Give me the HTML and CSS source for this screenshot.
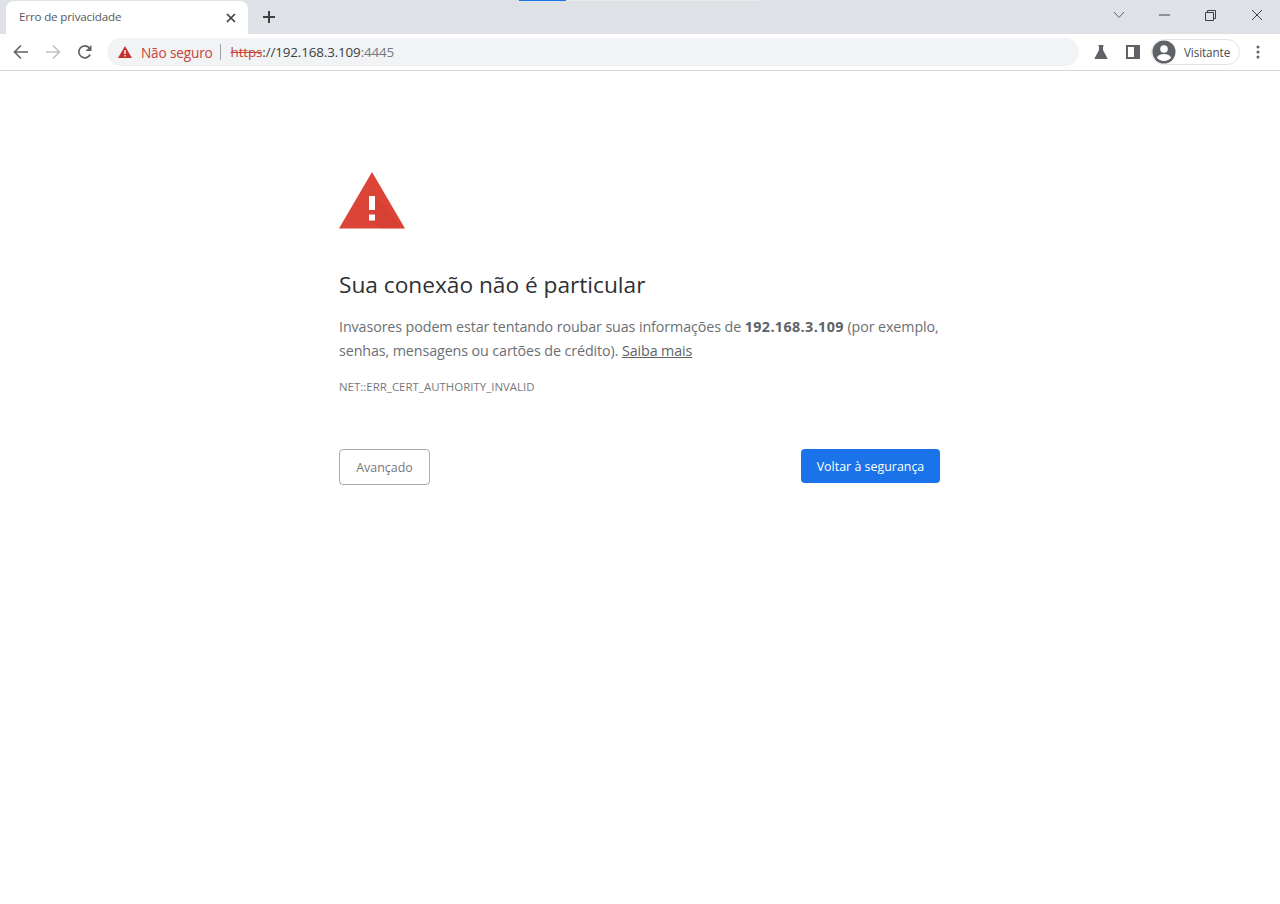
FILE: index.html
```html
<!DOCTYPE html>
<html lang="pt-BR">
<head>
<meta charset="utf-8">
<title>Erro de privacidade</title>
<link rel="stylesheet" href="styles.css">
</head>
<body>
<header class="chrome">
  <div class="strip">
    <div class="tab">
      <span class="tab-title">Erro de privacidade</span>
      <svg class="tab-close" width="10" height="10" viewBox="0 0 10 10"><path d="M1 1l8 8M9 1l-8 8" stroke="#3c4043" stroke-width="1.7" fill="none"/></svg>
    </div>
    <svg class="new-tab" width="14" height="14" viewBox="0 0 14 14"><path d="M7 1v12M1 7h12" stroke="#3c4043" stroke-width="2" fill="none"/></svg>
    <div class="drag-space"></div>
    <div class="win-controls">
      <svg class="win-chevron" width="12" height="8" viewBox="0 0 12 8"><path d="M1 1l5 5.5L11 1" stroke="#5f6368" stroke-width="1" fill="none"/></svg>
      <svg class="win-min" width="11" height="2" viewBox="0 0 11 2"><path d="M0 1h11" stroke="#3c4043" stroke-width="1" fill="none"/></svg>
      <svg class="win-restore" width="11" height="11" viewBox="0 0 11 11"><path d="M.5 2.500h8v8h-8zM2.500 2.500v-2h8v8h-2" stroke="#3c4043" stroke-width="1" fill="none"/></svg>
      <svg class="win-x" width="12" height="12" viewBox="0 0 12 12"><path d="M1 1l10 10M11 1L1 11" stroke="#3c4043" stroke-width="1" fill="none"/></svg>
    </div>
    <div class="progress-track"></div>
    <div class="progress-blue"></div>
  </div>
  <div class="toolbar">
    <svg class="nav" width="16" height="16" viewBox="0 0 16 16"><path d="M15 8H2M8 1.500L1.500 8 8 14.500" stroke="#5f6368" stroke-width="1.600" fill="none"/></svg>
    <svg class="nav" width="16" height="16" viewBox="0 0 16 16"><path d="M1 8h13M8 1.500L14.500 8 8 14.500" stroke="#bdc1c6" stroke-width="1.600" fill="none"/></svg>
    <svg class="nav" width="16" height="16" viewBox="0 0 16 16"><path d="M13.200 10.500A6 6 0 1 1 12.200 3.700" stroke="#5f6368" stroke-width="1.700" fill="none"/><path d="M14.500 1v6h-6z" fill="#5f6368"/></svg>
    <div class="omnibox">
      <svg class="warn-small" width="14" height="12" viewBox="0 0 14 12"><path d="M7 0l7 12H0z" fill="#c5322c"/><path d="M6.300 4h1.400v4H6.300zM6.300 9h1.400v1.400H6.300z" fill="#fff"/></svg>
      <span class="not-secure">Não seguro</span>
      <span class="omni-sep"></span>
      <span class="url"><span class="scheme">https</span><span class="url-host">://192.168.3.109</span>:4445</span>
    </div>
    <svg class="flask" width="16" height="16" viewBox="0 0 16 16"><path d="M5.500 1h5v1.500H10V6l4.500 8.500V15h-13v-.5L6 6V2.500h-.5z" fill="#5f6368"/></svg>
    <svg class="panel" width="14" height="14" viewBox="0 0 14 14"><path d="M0 0h14v14H0zM2 2v10h6V2z" fill="#5f6368" fill-rule="evenodd"/></svg>
    <div class="profile">
      <svg width="24" height="24" viewBox="0 0 24 24"><circle cx="12" cy="12" r="11.500" fill="#5f6368"/><circle cx="12" cy="9" r="3.800" fill="#fff"/><path d="M4.800 17.500c1.800-2.600 4.500-3.500 7.200-3.500s5.400.9 7.200 3.500c-1.700 2.200-4.200 3.500-7.200 3.500s-5.500-1.300-7.200-3.500z" fill="#fff"/></svg>
      <span class="profile-name">Visitante</span>
    </div>
    <svg class="menu" width="4" height="14" viewBox="0 0 4 14"><circle cx="2" cy="2" r="1.500" fill="#5f6368"/><circle cx="2" cy="7" r="1.500" fill="#5f6368"/><circle cx="2" cy="12" r="1.500" fill="#5f6368"/></svg>
  </div>
</header>
<main class="interstitial">
  <svg class="icon-big" width="66" height="58" viewBox="0 0 66 58">
    <path d="M33 0l33 56.500H0z" fill="#db4437"/>
    <path d="M36 24l29.500 32.500H42L33 50z" fill="#c53929" opacity=".18"/>
    <path d="M30 24h6v14h-6zM30 42.500h6v6h-6z" fill="#fff"/>
  </svg>
  <h1 class="heading">Sua conexão não é particular</h1>
  <p class="message">Invasores podem estar tentando roubar suas informações de <strong>192.168.3.109</strong> (por exemplo, senhas, mensagens ou cartões de crédito). <a class="learn" href="#">Saiba mais</a></p>
  <div class="err-code">NET::ERR_CERT_AUTHORITY_INVALID</div>
  <div class="actions">
    <button class="btn btn-secondary">Avançado</button>
    <button class="btn btn-primary">Voltar à segurança</button>
  </div>
</main>
</body>
</html>
```
FILE: styles.css
```css
* { box-sizing: border-box; }
html, body { margin: 0; padding: 0; height: 100%; background: #fff; }
body { font-family: "Open Sans", "Noto Sans", sans-serif; color: #5f6368; overflow: hidden; }

.chrome { height: 71px; border-bottom: 1px solid #d5d6d8; }
.strip { position: relative; display: flex; align-items: center; height: 34px; background: #dee1e6; }
.tab { display: flex; align-items: center; justify-content: space-between; align-self: flex-end; width: 242px; height: 33px; margin-left: 6px; padding: 0 12px 2px 13px; background: #fff; border-radius: 8px 8px 0 0; }
.tab-close { margin-top: 2px; }
.tab-title { font-size: 11.600px; letter-spacing: -.15px; color: #55585c; }
.new-tab { margin-left: 14px; }
.drag-space { flex: 1; }
.win-controls { display: flex; align-items: center; height: 30px; margin-bottom: 4px; }
.win-chevron { margin-right: 34px; }
.win-min { margin-right: 35px; }
.win-restore { margin-right: 35px; }
.win-x { margin-right: 17px; }
.progress-track { position: absolute; left: 567px; top: 0; width: 193px; height: 1px; background: #e8e9eb; }
.progress-blue { position: absolute; left: 519px; top: 0; width: 47px; height: 1px; background: #1a73e8; }

.toolbar { display: flex; align-items: center; height: 36px; padding-left: 13px; background: #fff; }
.nav { margin-right: 16px; flex: none; }
.omnibox { display: flex; align-items: center; width: 972px; height: 28px; margin-left: -2px; padding-left: 11px; background: #f1f3f4; border-radius: 14px; }
.warn-small { flex: none; }
.not-secure { margin-left: 9px; font-size: 13.600px; letter-spacing: -.15px; color: #c5433b; }
.omni-sep { width: 1px; height: 16px; margin: 0 10px 0 7px; background: #9a9ea3; }
.url { font-size: 13.400px; letter-spacing: -.13px; color: #75797e; }
.scheme { color: #c5433b; text-decoration: line-through; }
.url-host { color: #3c4043; }
.flask { margin-left: 14px; flex: none; }
.panel { margin-left: 17px; flex: none; }
.profile { display: flex; align-items: center; width: 89px; height: 26px; margin-left: 11px; border: 1px solid #e3e4e6; border-radius: 13px; }
.profile svg { flex: none; }
.profile-name { margin-left: 8px; font-size: 11.700px; letter-spacing: -.1px; color: #4a4d51; }
.menu { margin-left: 16px; flex: none; }

.interstitial { width: 601px; margin-left: 339px; padding-top: 101px; }
.icon-big { display: block; width: 66px; height: 58px; }
.heading { margin: 40px 0 0; font-size: 22.700px; line-height: 30px; font-weight: 400; letter-spacing: -.01px; color: #2e3033; }
.message { margin: 15px 0 0; font-size: 14.300px; line-height: 24px; letter-spacing: -.105px; color: #6b6f74; }
.message strong { font-weight: 700; letter-spacing: .4px; color: #5f6368; }
.learn { color: #5f6368; text-decoration: underline; }
.err-code { margin-top: 16px; font-size: 11.400px; line-height: 16px; letter-spacing: .04px; color: #75797e; }
.actions { display: flex; align-items: flex-start; justify-content: space-between; margin-top: 54px; }
.btn { font-family: inherit; font-size: 12.400px; letter-spacing: .02px; border-radius: 4px; padding: 0; }
.btn-secondary { width: 91px; height: 36px; background: #fff; border: 1px solid #a8abaf; color: #75797e; }
.btn-primary { width: 139px; height: 34px; background: #1a73e8; border: 0; color: #fff; }
```
